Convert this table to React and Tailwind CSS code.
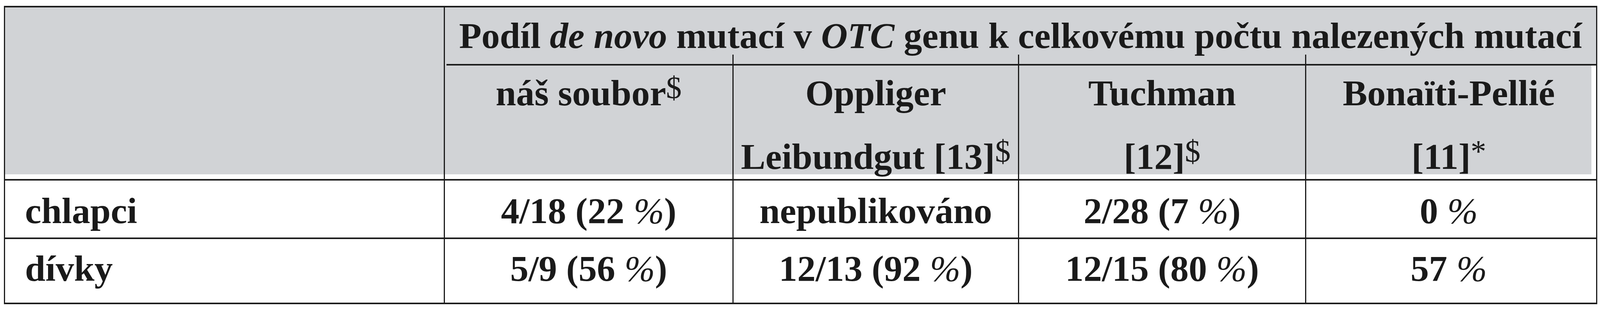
const heads = [
  { top: "náš soubor", topSup: "$", bottom: null, w: "w-[739px]" },
  { top: "Oppliger", bottom: "Leibundgut [13]", sup: "$", w: "w-[731px]" },
  { top: "Tuchman", bottom: "[12]", sup: "$", w: "w-[735px]" },
  { top: "Bonaïti-Pellié", bottom: "[11]", sup: "*", w: "w-[730px]" },
];

const rows = [
  { label: "chlapci", h: "h-[146px] pt-[27px]", line: true, cells: ["4/18 (22 %)", "nepublikováno", "2/28 (7 %)", "0 %"] },
  { label: "dívky", h: "h-[163px] pt-[25px]", line: false, cells: ["5/9 (56 %)", "12/13 (92 %)", "12/15 (80 %)", "57 %"] },
];

function Sup({ children }) {
  return <span className="relative -top-[18px] text-[80px] font-normal leading-none">{children}</span>;
}

// thin % like in the printed table
function Pct({ text }) {
  const parts = text.split("%");
  return parts.map((p, i) => (
    <span key={i}>
      {p}
      {i < parts.length - 1 && <span className="font-normal italic">%</span>}
    </span>
  ));
}

export default function App() {
  return (
    <div className="bg-white h-[800px] pt-[15px] pl-[10px] text-[#1a1a1a] font-['Liberation_Serif','Times_New_Roman',serif] font-bold text-[94px]">
      <div className="w-[4079px] border-x-[3px] border-y-4 border-[#1c1c1c]">
        {/* header */}
        <div className="flex border-b-4 border-[#1c1c1c]">
          <div className="w-[1126px] border-r-[3px] border-[#1c1c1c] pb-[12px]">
            <div className="h-[428px] bg-[#d1d3d6]" />
          </div>
          <div className="flex-1 flex flex-col">
            <div className="h-[145px] bg-[#d1d3d6] leading-[145px] text-center whitespace-nowrap">
              Podíl <i>de novo</i> mutací v <i>OTC</i> genu k celkovému počtu nalezených mutací
            </div>
            <div className="bg-[#d1d3d6] pl-[4px]">
              <div className="h-[4px] bg-[#1c1c1c]" />
            </div>
            <div className="flex">
              {heads.map((c, i) => (
                <div key={i} className={`${c.w} relative pb-[12px] ${i < 3 ? "border-r-[3px] border-[#1c1c1c]" : ""}`}>
                  {i < 3 && <span className="absolute -right-[3px] -top-[28px] w-[3px] h-[28px] bg-[#1c1c1c]" />}
                  <div className="h-[279px] bg-[#d1d3d6] pt-[20px] flex flex-col items-center gap-[63px] leading-[100px] whitespace-nowrap">
                    <div>
                      {c.top}
                      {c.topSup && <Sup>{c.topSup}</Sup>}
                    </div>
                    {c.bottom && (
                      <div>
                        {c.bottom}
                        <Sup>{c.sup}</Sup>
                      </div>
                    )}
                  </div>
                </div>
              ))}
            </div>
          </div>
        </div>

        {/* body */}
        {rows.map((r) => (
          <div key={r.label} className={`flex ${r.line ? "border-b-4 border-[#1c1c1c]" : ""}`}>
            <div className={`w-[1126px] border-r-[3px] border-[#1c1c1c] pl-[51px] leading-[100px] ${r.h}`}>{r.label}</div>
            {r.cells.map((v, i) => (
              <div
                key={i}
                className={`${heads[i].w} text-center leading-[100px] whitespace-nowrap ${r.h} ${i < 3 ? "border-r-[3px] border-[#1c1c1c]" : ""}`}
              >
                <Pct text={v} />
              </div>
            ))}
          </div>
        ))}
      </div>
    </div>
  );
}
